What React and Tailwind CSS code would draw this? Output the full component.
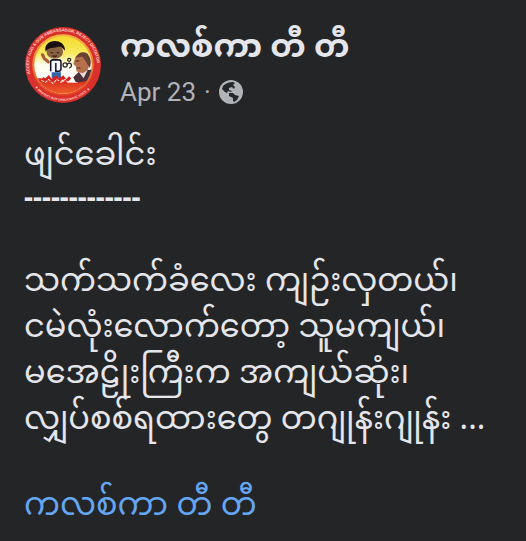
import React from "react";

const AUTHOR = "ကလစ်ကာ တီ တီ";

const VERSE = [
  "သက်သက်ခံလေး ကျဉ်းလှတယ်၊",
  "ငမဲလုံးလောက်တော့ သူမကျယ်၊",
  "မအေဠိုးကြီးက အကျယ်ဆုံး၊",
  "လျှပ်စစ်ရထားတွေ တဂျုန်းဂျုန်း ...",
];

function Avatar() {
  return (
    <svg viewBox="0 0 76 76" className="size-[78px] shrink-0" role="img" aria-label={AUTHOR}>
      <defs>
        <linearGradient id="ring" x1="0" y1="0" x2="0" y2="1">
          <stop offset="0" stopColor="#f6b545" />
          <stop offset="1" stopColor="#e4451f" />
        </linearGradient>
        <linearGradient id="sky" x1="0" y1="0" x2="0" y2="1">
          <stop offset="0" stopColor="#f3dc2c" />
          <stop offset="0.3" stopColor="#f8e961" />
          <stop offset="0.5" stopColor="#fffdf0" />
          <stop offset="1" stopColor="#ffffff" />
        </linearGradient>
        <linearGradient id="ground" x1="0" y1="0" x2="0" y2="1">
          <stop offset="0" stopColor="#d8211f" />
          <stop offset="1" stopColor="#f0702a" />
        </linearGradient>
        <clipPath id="disc"><circle cx="38" cy="38" r="28" /></clipPath>
        <path id="topArc" d="M9 54 A33 33 0 1 1 67 54" />
        <path id="bottomArc" d="M6 52 A35 35 0 0 0 70 52" />
      </defs>
      <circle cx="38" cy="38" r="37" fill="#d9302b" />
      <g className="font-['Liberation_Sans'] font-bold" fill="#ffd5cb">
        <text fontSize="4">
          <textPath href="#topArc" startOffset="8">ACCEPT NUG &amp; OUR AMBASSADOR, REJECT DICTATOR</textPath>
        </text>
        <text fontSize="3">
          <textPath href="#bottomArc" startOffset="9">★ PROTECT OUR DEMOCRATIC VOICE ★</textPath>
        </text>
      </g>
      <circle cx="38" cy="38" r="30" fill="url(#ring)" />
      <circle cx="38" cy="38" r="28" fill="url(#sky)" />
      <g clipPath="url(#disc)">
        <path d="M48 50 L54 44 L70 42 V56 L58 58 L50 54Z" fill="#4a3038" />
        <path d="M53 44 L58 51 L62 43Z" fill="#e9dcd8" />
        <path d="M50 31 Q54 25 61 28 Q66 34 62 43 L57 46 L51 44 L51 40 L48 37Z" fill="#b5714c" />
        <path d="M50 31 Q55 23 62 27 Q67 33 64 41 L60 34 L57 30Z" fill="#6b4232" />
        <path d="M50 34 h4 M51 41 h4" stroke="#502719" strokeWidth="1" />
        <path d="M8 51 Q24 50 38 54 Q54 58 68 50 V70 H8Z" fill="url(#ground)" />
      </g>
      <path d="M24 35 L20 32 L18 28" fill="none" stroke="#a65c37" strokeWidth="3" strokeLinecap="round" />
      <path d="M25 32 H36 L38 45 H25Z" fill="#f4f6fc" />
      <path d="M27 45 H36 V51 H27Z" fill="#3465aa" />
      <path d="M29 51 V54 M34 51 V54" stroke="#8c4028" strokeWidth="2" />
      <ellipse cx="30" cy="25" rx="8" ry="7" fill="#8a6042" />
      <path d="M21 25 C18 12 40 11 40 24 C38 22 36 20 34 20 C30 22 24 20 21 25Z" fill="#17100e" />
      <path d="M26 26 h2 M32 26 h2 M28 29 q2 1 4 0" stroke="#25110c" strokeWidth="1" fill="none" />
      <path d="M26 44 V35 Q26 33 28 33 H34 Q36 33 36 35 V42 Q36 44 34 44 H31 V36" fill="none" stroke="#171329" strokeWidth="1.500" />
      <g fill="none" stroke="#242222" strokeWidth="1.200">
        <circle cx="40" cy="38" r="2" />
        <path d="M42 38 Q43 35 46 37 Q47 40 44 41" />
        <circle cx="44" cy="33" r="1.500" />
      </g>
      <path d="M18 51 l3 2 3-3 3 4 4-4 3 3 4-3 3 4 4-4" fill="none" stroke="#d8211f" strokeWidth="3" />
      <path d="M17 53 l4 2 3-3 4 4 4-4 4 3 4-3 4 4" fill="none" stroke="#ffe3d0" strokeWidth="1" strokeDasharray="3 1" />
    </svg>
  );
}

function Globe() {
  return (
    <svg viewBox="0 0 24 24" className="size-6" role="img" aria-label="Public">
      <circle cx="12" cy="12" r="12" fill="#b0b3b8" />
      <path d="M4 6 Q8 2 14 2 L16 3 L14 5 L16 7 L15 9 L13 7 L10 8 L10 10 L13 11 L12 12 L9 11 L8 13 L6 12 L3 9Z" fill="#252628" />
      <path d="M10 13 L14 13 L16 15 L20 16 L18 20 L15 22 L14 21 L14 18 L10 16Z" fill="#252628" />
    </svg>
  );
}

export default function App() {
  return (
    <main className="min-h-screen bg-[#242526] px-6 pt-[26px] text-[#e4e6eb] font-['Noto_Sans_Myanmar','Roboto',sans-serif]">
      <article>
        <header className="flex items-start gap-[18px]">
          <Avatar />
          <div className="pt-px">
            <h1 className="text-[32px] leading-[46px] font-bold whitespace-nowrap">{AUTHOR}</h1>
            <div className="flex items-center gap-2 font-['Roboto'] text-[26px] leading-[38px] text-[#b0b3b8]">
              <time>Apr 23</time>
              <span>·</span>
              <Globe />
            </div>
          </div>
        </header>

        <div className="pt-6 text-[32px] leading-[46px] whitespace-nowrap">
          <p>ဖျင်ခေါင်း</p>
          <p className="font-['Noto_Sans'] text-[28px] leading-[30px] font-bold">-------------</p>
          <div className="pt-[50px]">
            {VERSE.map((line) => (
              <p key={line}>{line}</p>
            ))}
          </div>
        </div>

        <a href="#author" className="mt-10 block text-[32px] leading-[46px] text-[#64a6f2]">{AUTHOR}</a>
      </article>
    </main>
  );
}
